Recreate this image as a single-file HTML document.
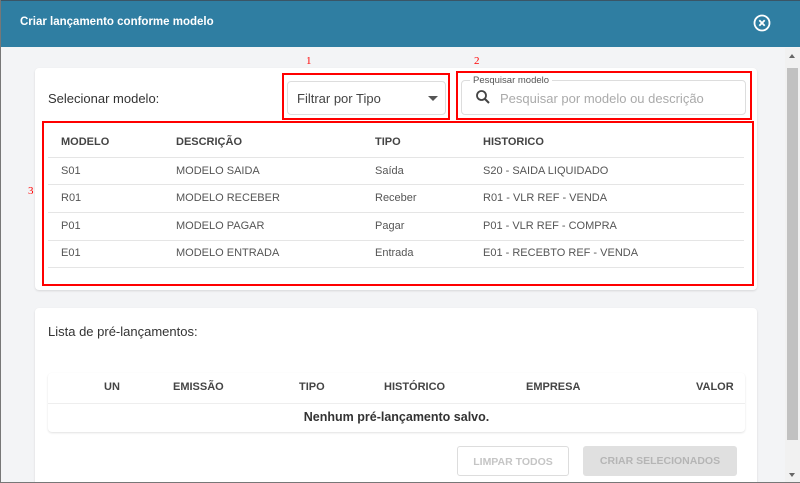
<!DOCTYPE html>
<html><head><meta charset="utf-8"><style>
*{box-sizing:border-box;margin:0;padding:0}
html,body{width:800px;height:483px;overflow:hidden}
body{background:#f3f4f6;font-family:"Liberation Sans",sans-serif;position:relative;color:#333}
.a{position:absolute}
.hdr{left:0;top:0;width:800px;height:47px;background:#2f7ea2;border-top:1px solid #3a5566}
.card{background:#fff;border-radius:4px;box-shadow:0 1px 2px rgba(0,0,0,.12)}
.red{border:2px solid #f00}
.rn{color:#f00;font-family:"Liberation Serif",serif;font-size:11px}
.th{font-size:11px;font-weight:bold;color:#444}
.td{font-size:11px;color:#555}
.ln{height:1px;background:#e5e5e5;left:48px;width:696px}
.btn{font-size:10.5px;font-weight:bold;text-align:center;line-height:30px;border-radius:3px}
</style></head><body>
<div class="a hdr"></div>
<div class="a" style="left:20px;top:16px;color:#fff;font-size:11.5px;font-weight:bold">Criar lançamento conforme modelo</div>
<svg class="a" style="left:753px;top:14px" width="18" height="18" viewBox="0 0 18 18"><circle cx="9" cy="9" r="7.5" fill="none" stroke="#fff" stroke-width="1.8"/><path d="M6.3 6.3L11.7 11.7M11.7 6.3L6.3 11.7" stroke="#fff" stroke-width="1.8"/></svg>

<div class="a card" style="left:35px;top:68px;width:722px;height:222px"></div>
<div class="a" style="left:48px;top:91px;font-size:13px;color:#333">Selecionar modelo:</div>
<div class="a rn" style="left:306px;top:55px">1</div>
<div class="a rn" style="left:474px;top:55px">2</div>
<div class="a rn" style="left:28px;top:185px">3</div>
<div class="a red" style="left:282px;top:73px;width:168px;height:47px"></div>
<div class="a" style="left:287px;top:81px;width:159px;height:34px;border:1px solid #ddd;border-radius:4px"></div>
<div class="a" style="left:297px;top:91px;font-size:13px;color:#444">Filtrar por Tipo</div>
<div class="a" style="left:428px;top:96px;width:0;height:0;border-left:5px solid transparent;border-right:5px solid transparent;border-top:5px solid #555"></div>
<div class="a red" style="left:456px;top:71px;width:296px;height:49px"></div>
<div class="a" style="left:461px;top:80px;width:285px;height:35px;border:1px solid #ddd;border-radius:4px"></div>
<div class="a" style="left:470px;top:75px;background:#fff;padding:0 3px;font-size:9.5px;color:#555">Pesquisar modelo</div>
<svg class="a" style="left:475px;top:89px" width="16" height="16" viewBox="0 0 16 16"><circle cx="6.5" cy="6.5" r="4.5" fill="none" stroke="#444" stroke-width="1.8"/><path d="M10 10L14 14" stroke="#444" stroke-width="2"/></svg>
<div class="a" style="left:500px;top:91px;font-size:13px;color:#aaa">Pesquisar por modelo ou descrição</div>

<div class="a red" style="left:42px;top:121px;width:712px;height:165px"></div>
<div class="a th" style="left:61px;top:136px">MODELO</div>
<div class="a th" style="left:176px;top:136px">DESCRIÇÃO</div>
<div class="a th" style="left:375px;top:136px">TIPO</div>
<div class="a th" style="left:483px;top:136px">HISTORICO</div>
<div class="a ln" style="top:157px"></div>
<div class="a ln" style="top:184px"></div>
<div class="a ln" style="top:212px"></div>
<div class="a ln" style="top:240px"></div>
<div class="a ln" style="top:267px"></div>
<div class="a td" style="left:61px;top:165px">S01</div><div class="a td" style="left:176px;top:165px">MODELO SAIDA</div><div class="a td" style="left:375px;top:165px">Saída</div><div class="a td" style="left:483px;top:165px">S20 - SAIDA LIQUIDADO</div>
<div class="a td" style="left:61px;top:192px">R01</div><div class="a td" style="left:176px;top:192px">MODELO RECEBER</div><div class="a td" style="left:375px;top:192px">Receber</div><div class="a td" style="left:483px;top:192px">R01 - VLR REF - VENDA</div>
<div class="a td" style="left:61px;top:220px">P01</div><div class="a td" style="left:176px;top:220px">MODELO PAGAR</div><div class="a td" style="left:375px;top:220px">Pagar</div><div class="a td" style="left:483px;top:220px">P01 - VLR REF - COMPRA</div>
<div class="a td" style="left:61px;top:247px">E01</div><div class="a td" style="left:176px;top:247px">MODELO ENTRADA</div><div class="a td" style="left:375px;top:247px">Entrada</div><div class="a td" style="left:483px;top:247px">E01 - RECEBTO REF - VENDA</div>

<div class="a card" style="left:35px;top:308px;width:722px;height:175px;border-radius:4px 4px 0 0"></div>
<div class="a" style="left:48px;top:324px;font-size:13px;color:#333">Lista de pré-lançamentos:</div>
<div class="a card" style="left:48px;top:373px;width:697px;height:59px"></div>
<div class="a" style="left:48px;top:403px;width:697px;height:1px;background:#eee"></div>
<div class="a th" style="left:104px;top:381px">UN</div>
<div class="a th" style="left:173px;top:381px">EMISSÃO</div>
<div class="a th" style="left:299px;top:381px">TIPO</div>
<div class="a th" style="left:384px;top:381px">HISTÓRICO</div>
<div class="a th" style="left:526px;top:381px">EMPRESA</div>
<div class="a th" style="left:696px;top:381px">VALOR</div>
<div class="a" style="left:48px;top:410px;width:697px;text-align:center;font-size:12.5px;font-weight:bold;color:#333">Nenhum pré-lançamento salvo.</div>
<div class="a btn" style="left:457px;top:446px;width:112px;height:30px;border:1px solid #ddd;color:#c5c5c5;background:#fff">LIMPAR TODOS</div>
<div class="a btn" style="left:583px;top:446px;width:154px;height:30px;background:#e0e0e0;color:#b5b5b5">CRIAR SELECIONADOS</div>

<div class="a" style="left:785px;top:48px;width:15px;height:435px;background:#f1f1f1"></div>
<div class="a" style="left:787px;top:68px;width:11px;height:372px;background:#c1c1c1"></div>
<div class="a" style="left:789px;top:54px;width:0;height:0;border-left:3px solid transparent;border-right:3px solid transparent;border-bottom:4px solid #666"></div>
<div class="a" style="left:789px;top:473px;width:0;height:0;border-left:3px solid transparent;border-right:3px solid transparent;border-top:4px solid #666"></div>
<div class="a" style="left:0;top:0;width:1px;height:483px;background:#777"></div>
<div class="a" style="left:0;top:482px;width:800px;height:1px;background:#777"></div>
</body></html>
